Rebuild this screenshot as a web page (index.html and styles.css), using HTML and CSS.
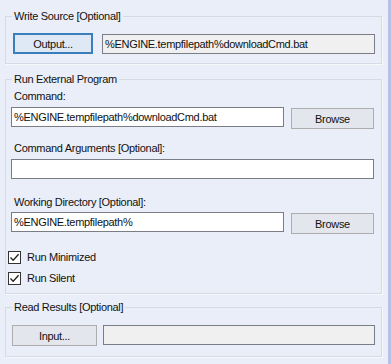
FILE: index.html
```html
<!DOCTYPE html>
<html lang="en">
<head>
    <meta charset="UTF-8">
    <meta name="viewport" content="width=device-width, initial-scale=1.0">
    <title>Run External Program</title>
    <link rel="stylesheet" href="styles.css">
</head>
<body>
    <div class="panel">
        <div class="group group-write">
            <div class="group-title">Write Source [Optional]</div>
            <div class="row row-file">
                <button class="btn btn-default btn-output">Output...</button>
                <div class="textbox readonly tb-file">%ENGINE.tempfilepath%downloadCmd.bat</div>
            </div>
        </div>

        <div class="group group-run">
            <div class="group-title">Run External Program</div>
            <div class="field-label label-command">Command:</div>
            <div class="row row-browse">
                <div class="textbox tb-short">%ENGINE.tempfilepath%downloadCmd.bat</div>
                <button class="btn btn-browse">Browse</button>
            </div>
            <div class="field-label label-args">Command Arguments [Optional]:</div>
            <div class="textbox tb-wide"></div>
            <div class="field-label label-dir">Working Directory [Optional]:</div>
            <div class="row row-browse row-dir">
                <div class="textbox tb-short">%ENGINE.tempfilepath%</div>
                <button class="btn btn-browse">Browse</button>
            </div>
            <label class="check check-first">
                <span class="check-box">
                    <svg width="11" height="11" viewBox="0 0 11 11"><path d="M1.5 5.5 L4.2 8.3 L9.6 2.3" fill="none" stroke="#222" stroke-width="1.3"/></svg>
                </span>
                Run Minimized
            </label>
            <label class="check check-second">
                <span class="check-box">
                    <svg width="11" height="11" viewBox="0 0 11 11"><path d="M1.5 5.5 L4.2 8.3 L9.6 2.3" fill="none" stroke="#222" stroke-width="1.3"/></svg>
                </span>
                Run Silent
            </label>
        </div>

        <div class="group group-read">
            <div class="group-title">Read Results [Optional]</div>
            <div class="row row-file row-input">
                <button class="btn btn-input">Input...</button>
                <div class="textbox readonly tb-input"></div>
            </div>
        </div>
    </div>
</body>
</html>
```

FILE: styles.css
```css
/* General */
body {
    margin: 0;
    background: #b5c0e4;
    font-family: "Liberation Sans", Arial, sans-serif;
    font-size: 11px;
    letter-spacing: -0.3px;
    color: #111;
}

.panel {
    width: 388px;
    height: 364px;
    background: #eaeef8;
    padding-top: 16px;
    box-sizing: border-box;
    overflow: hidden;
}

/* Group boxes */
.group {
    width: 377px;
    margin-left: 5px;
    border: 1px solid #d4dae6;
    box-shadow: 1px 1px 0 #f7f9fd;
    box-sizing: border-box;
}

.group-run {
    margin-top: 15px;
    padding-bottom: 7px;
}

.group-read {
    margin-top: 13px;
}

.group-title {
    width: fit-content;
    margin: -8px 0 0 6px;
    padding: 0 2px;
    line-height: 15px;
    background: #eaeef8;
}

.field-label {
    margin-left: 8px;
    line-height: 15px;
}

.label-command { margin-top: 2px; }
.label-args { margin-top: 12px; }
.label-dir { margin-top: 16px; }

/* Rows */
.row {
    display: flex;
    align-items: flex-start;
}

.row-file {
    margin-top: 9px;
    padding: 0 0 9px 7px;
    gap: 9px;
}

.row-input {
    margin-top: 10px;
    padding: 0 0 10px 6px;
    gap: 6px;
}

.row-browse {
    margin-top: 3px;
    padding-left: 5px;
    gap: 7px;
}

.row-dir {
    margin-top: 2px;
}

/* Text boxes */
.textbox {
    height: 20px;
    border: 1px solid #7a7d85;
    background: #fff;
    box-sizing: border-box;
    padding: 0 2px;
    line-height: 18px;
    white-space: nowrap;
    overflow: hidden;
}

.textbox.readonly {
    background: #f0f0f0;
}

.tb-file { width: 273px; margin-top: 1px; }
.tb-input { width: 272px; }
.tb-short { width: 273px; }

.tb-wide {
    width: 363px;
    margin: 3px 0 0 5px;
}

/* Buttons */
.btn {
    height: 21px;
    padding: 0;
    border: 1px solid #adadad;
    background: #e4e6ee;
    font-family: inherit;
    font-size: 11px;
    letter-spacing: inherit;
    color: #111;
    box-sizing: border-box;
}

.btn-default {
    border: 2px solid #3a7fbb;
    background: #dfe9f5;
}

.btn-output { width: 80px; }
.btn-input { width: 85px; }

.btn-browse {
    width: 83px;
    margin-top: 1px;
}

/* Checkboxes */
.check {
    display: flex;
    align-items: center;
    gap: 6px;
    margin-left: 2px;
    line-height: 15px;
}

.check-first { margin-top: 16px; }
.check-second { margin-top: 6px; }

.check-box {
    width: 13px;
    height: 13px;
    border: 1px solid #333;
    background: #fff;
    box-sizing: border-box;
    display: flex;
    align-items: center;
    justify-content: center;
}
```
